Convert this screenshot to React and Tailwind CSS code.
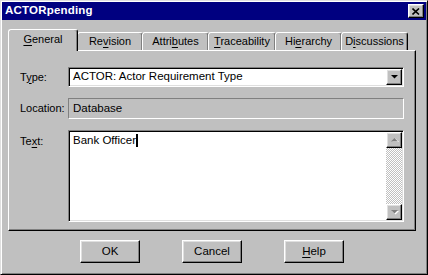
import React from "react";

const raised =
  "border border-t-white border-l-white border-r-black border-b-black shadow-[inset_-1px_-1px_#808080,inset_1px_1px_#dfdfdf]";
const sunken =
  "border border-t-[#808080] border-l-[#808080] border-r-white border-b-white shadow-[inset_1px_1px_#000,inset_-1px_-1px_#dfdfdf]";

const tabs = [
  { label: "General", key: "G", rest: "eneral", pre: "", w: "w-[70px]" },
  { label: "Revision", pre: "Re", key: "v", rest: "ision", w: "w-[66px]" },
  { label: "Attributes", pre: "Attri", key: "b", rest: "utes", w: "w-[67px]" },
  { label: "Traceability", pre: "", key: "T", rest: "raceability", w: "w-[68px]" },
  { label: "Hierarchy", pre: "Hi", key: "e", rest: "rarchy", w: "w-[67px]" },
  { label: "Discussions", pre: "D", key: "i", rest: "scussions", w: "w-[67px]" },
];

function Mn({ pre, k, rest }) {
  return (
    <span>
      {pre}
      <span className="underline underline-offset-[2px]">{k}</span>
      {rest}
    </span>
  );
}

function Arrow({ up, disabled }) {
  const color = disabled ? "#808080" : "#000";
  return (
    <svg width="9" height="6" viewBox="0 0 9 6">
      {disabled && (
        <path
          d={up ? "M2 5h7L5.5 1.5z" : "M2 2h7L5.5 5.5z"}
          fill="#fff"
        />
      )}
      <path d={up ? "M1 4.5h7L4.5 1z" : "M1 1h7L4.5 4.5z"} fill={color} />
    </svg>
  );
}

export default function App() {
  return (
    <div className="w-[428px] h-[275px] bg-[#c0c0c0] border border-t-[#dfdfdf] border-l-[#dfdfdf] border-r-black border-b-black shadow-[inset_1px_1px_#fff,inset_-1px_-1px_#808080] p-[1px] flex flex-col font-['Liberation_Sans',Arial,sans-serif] text-[11px] text-black leading-none">
      {/* title bar */}
      <div className="h-[18px] bg-[#000080] flex items-center justify-between pl-[3px] pr-[2px]">
        <span className="text-white font-bold text-[11.5px] tracking-[0.2px]">ACTORpending</span>
        <div className={`w-[16px] h-[14px] bg-[#c0c0c0] flex items-center justify-center ${raised}`}>
          <svg width="8" height="7" viewBox="0 0 8 7">
            <path d="M0.5 0.5L7 6.5M7 0.5L0.5 6.5" stroke="#000" strokeWidth="1.6" />
          </svg>
        </div>
      </div>

      {/* tabs */}
      <div className="mt-[9px] ml-[6px] flex items-end h-[21px]">
        {tabs.map((t, i) => {
          const sel = i === 0;
          return (
            <div
              key={t.label}
              className={`${t.w} ${
                sel ? "h-[22px] relative z-10 -mb-[1px] border-b-0 pb-[2px]" : "h-[18px] -ml-[1px]"
              } bg-[#c0c0c0] border border-t-white border-l-white border-r-black border-b-0 rounded-t-[3px] shadow-[inset_-1px_0_#808080] flex items-center justify-center`}
            >
              <Mn pre={t.pre} k={t.key} rest={t.rest} />
            </div>
          );
        })}
      </div>

      {/* panel */}
      <div className="ml-[6px] w-[408px] h-[181px] border border-t-white border-l-white border-r-black border-b-black shadow-[inset_-1px_-1px_#808080] pt-[16px] pl-[11px] flex flex-col">
        <div className="flex items-center h-[20px]">
          <div className="w-[48px]">
            <Mn pre="T" k="y" rest="pe:" />
          </div>
          <div className={`w-[336px] h-[20px] p-[1px] flex ${sunken}`}>
            <div className="flex-1 bg-white flex items-center pl-[3px] text-[11.5px]">
              ACTOR: Actor Requirement Type
            </div>
            <div className={`w-[16px] h-full bg-[#c0c0c0] flex items-center justify-center ${raised}`}>
              <Arrow />
            </div>
          </div>
        </div>

        <div className="flex items-center h-[21px] mt-[11px]">
          <div className="w-[48px]">Location:</div>
          <div className="w-[336px] h-[21px] border border-t-[#808080] border-l-[#808080] border-r-white border-b-white shadow-[inset_-1px_-1px_#c0c0c0] flex items-center pl-[4px] text-[11.5px]">
            Database
          </div>
        </div>

        <div className="flex mt-[11px]">
          <div className="w-[48px] pt-[6px]">
            <Mn pre="Te" k="x" rest="t:" />
          </div>
          <div className={`w-[336px] h-[92px] p-[1px] flex ${sunken}`}>
            <div className="flex-1 bg-white pl-[3px] pt-[3px] text-[11.5px] flex items-start">
              <span>Bank Officer</span>
              <span className="w-[2px] h-[13px] bg-black -mt-[1px]" />
            </div>
            <div className="w-[16px] h-full flex flex-col">
              <div className={`h-[16px] bg-[#c0c0c0] flex items-center justify-center ${raised}`}>
                <Arrow up disabled />
              </div>
              <div className="flex-1 bg-[repeating-conic-gradient(#c0c0c0_0_25%,#fff_0_50%)] bg-[length:2px_2px]" />
              <div className={`h-[16px] bg-[#c0c0c0] flex items-center justify-center ${raised}`}>
                <Arrow disabled />
              </div>
            </div>
          </div>
        </div>
      </div>

      {/* buttons */}
      <div className="mt-[9px] ml-[78px] flex gap-[42px]">
        {[
          { pre: "OK", k: "", rest: "" },
          { pre: "Cancel", k: "", rest: "" },
          { pre: "", k: "H", rest: "elp" },
        ].map((b) => (
          <div
            key={b.pre + b.k}
            className={`w-[60px] h-[23px] bg-[#c0c0c0] flex items-center justify-center text-[11.5px] ${raised}`}
          >
            <Mn pre={b.pre} k={b.k} rest={b.rest} />
          </div>
        ))}
      </div>
    </div>
  );
}
